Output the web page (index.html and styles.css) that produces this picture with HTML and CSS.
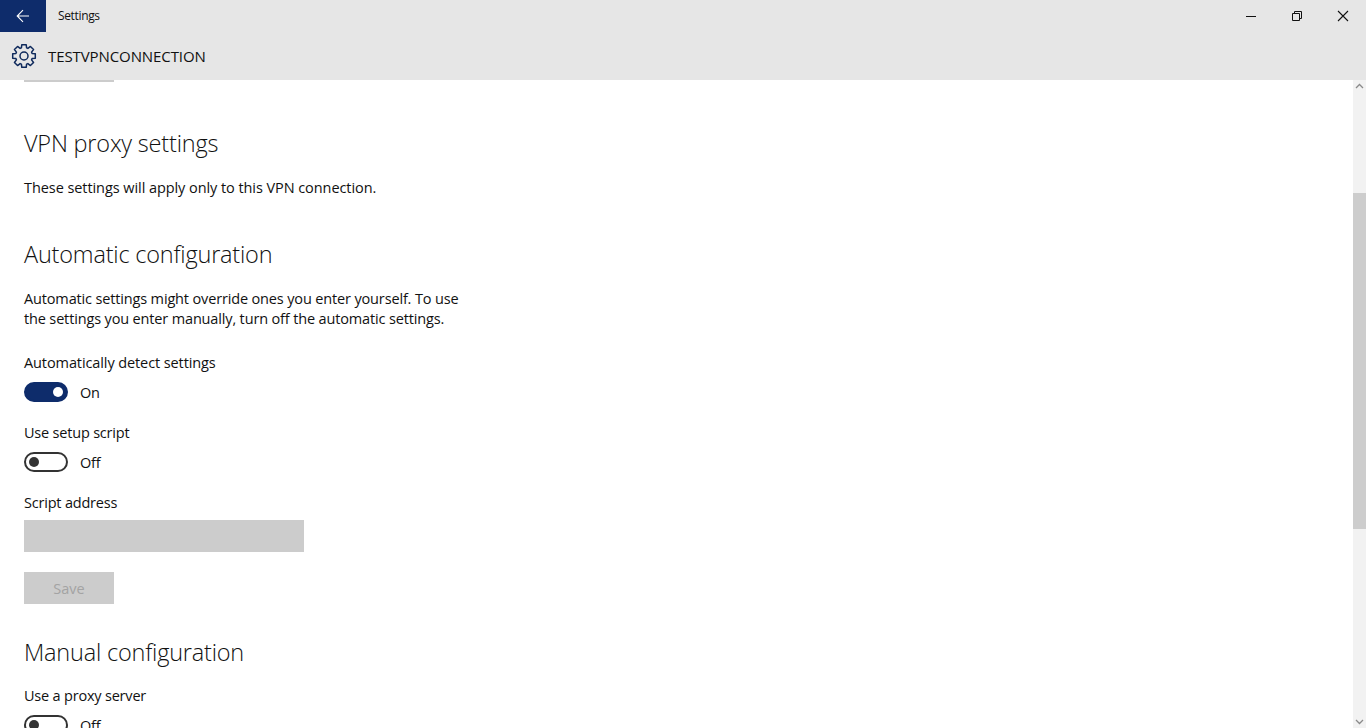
FILE: index.html
```html
<!DOCTYPE html>
<html lang="en">
<head>
<meta charset="utf-8">
<title>Settings</title>
<link rel="stylesheet" href="styles.css">
</head>
<body>
<div class="window">
  <div class="titlebar">
    <div class="back"><svg width="16" height="16" viewBox="0 0 16 16"><path d="M14 8H2.5M8 2.2 2.2 8 8 13.8" fill="none" stroke="#fff" stroke-width="1.1"/></svg></div>
    <div class="app-title">Settings</div>
    <div class="controls">
      <div class="ctl"><svg width="12" height="12" viewBox="0 0 12 12"><path d="M1 6.5h10" stroke="#111" stroke-width="1" fill="none"/></svg></div>
      <div class="ctl"><svg width="12" height="12" viewBox="0 0 12 12"><path d="M1.5 3.5h7v7h-7zM3.5 3.5v-2h7v7h-2" stroke="#111" stroke-width="1" fill="none"/></svg></div>
      <div class="ctl"><svg width="12" height="12" viewBox="0 0 12 12"><path d="M1 1l10 10M11 1 1 11" stroke="#111" stroke-width="1.1" fill="none"/></svg></div>
    </div>
  </div>
  <div class="header">
    <svg class="gear" width="26" height="26" viewBox="-13 -13 26 26"><path d="M-2.2-11.3H2.2L2.6-8.1 3.89-7.57 6.43-9.55 9.55-6.43 7.57-3.89 8.1-2.6 11.3-2.2V2.2L8.1 2.6 7.57 3.89 9.55 6.43 6.43 9.55 3.89 7.57 2.6 8.1 2.2 11.3H-2.2L-2.6 8.1-3.89 7.57-6.43 9.55-9.55 6.43-7.57 3.89-8.1 2.6-11.3 2.2V-2.2L-8.1-2.6-7.57-3.89-9.55-6.43-6.43-9.55-3.89-7.57-2.6-8.1z" fill="none" stroke="#0f2a5c" stroke-width="1.5" stroke-linejoin="round"/><circle r="4" fill="none" stroke="#0f2a5c" stroke-width="1.5"/></svg>
    <div class="header-title">TESTVPNCONNECTION</div>
  </div>
  <div class="main">
    <div class="content">
      <div class="stub"></div>
      <h2 class="h-first">VPN proxy settings</h2>
      <p class="text t-first">These settings will apply only to this VPN connection.</p>
      <h2 class="h-auto">Automatic configuration</h2>
      <p class="text t-auto">Automatic settings might override ones you enter yourself. To use<br>the settings you enter manually, turn off the automatic settings.</p>
      <div class="label l-detect">Automatically detect settings</div>
      <div class="toggle-row"><span class="toggle on"><span class="knob"></span></span><span class="state">On</span></div>
      <div class="label l-next">Use setup script</div>
      <div class="toggle-row"><span class="toggle"><span class="knob"></span></span><span class="state">Off</span></div>
      <div class="label l-next">Script address</div>
      <div class="input"></div>
      <div class="btn">Save</div>
      <h2 class="h-manual">Manual configuration</h2>
      <div class="label l-proxy">Use a proxy server</div>
      <div class="toggle-row"><span class="toggle"><span class="knob"></span></span><span class="state">Off</span></div>
    </div>
    <div class="scrollbar">
      <svg class="arrow" width="13" height="13" viewBox="0 0 13 13"><path d="M3 8l3.5-3.5L10 8" fill="none" stroke="#8a8a8a" stroke-width="1.3"/></svg>
      <div class="track-top"></div>
      <div class="thumb"></div>
      <div class="track-bottom"></div>
      <svg class="arrow" width="13" height="13" viewBox="0 0 13 13"><path d="M3 5l3.5 3.5L10 5" fill="none" stroke="#8a8a8a" stroke-width="1.3"/></svg>
    </div>
  </div>
</div>
</body>
</html>
```
FILE: styles.css
```css
* { box-sizing: border-box; }
html, body { margin: 0; height: 100%; overflow: hidden; background: #fff; }
body { font-family: "Open Sans", "Noto Sans", sans-serif; color: #111; }
.window { width: 1366px; height: 728px; display: flex; flex-direction: column; }
.titlebar { height: 32px; background: #e6e6e6; display: flex; align-items: center; flex: none; }
.back { width: 46px; height: 32px; background: #0e2c6b; display: flex; align-items: center; justify-content: center; }
.app-title { margin-left: 12px; font-size: 12px; letter-spacing: -.35px; color: #111; margin-bottom: 2px; }
.controls { margin-left: auto; display: flex; }
.ctl { width: 46px; height: 32px; display: flex; align-items: center; justify-content: center; }
.header { height: 48px; background: #e6e6e6; display: flex; align-items: center; padding-left: 11px; flex: none; }
.gear { flex: none; }
.header-title { margin-left: 11px; font-size: 15px; font-weight: 500; letter-spacing: -.09px; color: #111; }
.main { flex: 1; display: flex; min-height: 0; }
.content { flex: 1; padding-left: 24px; overflow: hidden; }
.stub { width: 90px; height: 2px; background: #ccc; }
h2 { margin: 0; font-weight: 300; font-size: 23.5px; line-height: 32px; letter-spacing: -.2px; color: #111; }
.h-first { margin-top: 45px; }
.h-auto { margin-top: 40px; }
.h-manual { margin-top: 32px; }
.text { margin: 0; font-size: 14.5px; line-height: 20px; letter-spacing: -.07px; }
.t-first { margin-top: 19px; }
.text.t-auto { margin-top: 19px; letter-spacing: -.15px; }
.label { font-size: 14.5px; line-height: 20px; letter-spacing: -.1px; }
.l-detect { margin-top: 24px; }
.l-next { margin-top: 21px; letter-spacing: -.2px; }
.l-proxy { margin-top: 18px; letter-spacing: -.2px; }
.toggle-row { display: flex; align-items: center; height: 20px; margin-top: 9px; }
.toggle { width: 44px; height: 20px; border: 2px solid #333; border-radius: 10px; display: flex; align-items: center; padding: 0 3px; flex: none; }
.toggle.on { background: #0e2c6b; border-color: #0e2c6b; justify-content: flex-end; }
.knob { width: 10px; height: 10px; border-radius: 50%; background: #333; }
.on .knob { background: #fff; }
.state { margin-left: 12px; font-size: 14.5px; letter-spacing: -.2px; }
.input { width: 280px; height: 32px; background: #ccc; margin-top: 7px; }
.btn { width: 90px; height: 32px; background: #ccc; margin-top: 20px; color: #a3a3a3; font-size: 14.5px; display: flex; align-items: center; justify-content: center; }
.scrollbar { width: 13px; flex: none; background: #f2f2f2; display: flex; flex-direction: column; }
.arrow { flex: none; }
.track-top { height: 100px; flex: none; }
.thumb { height: 336px; background: #cdcdcd; flex: none; }
.track-bottom { flex: 1; }
```
